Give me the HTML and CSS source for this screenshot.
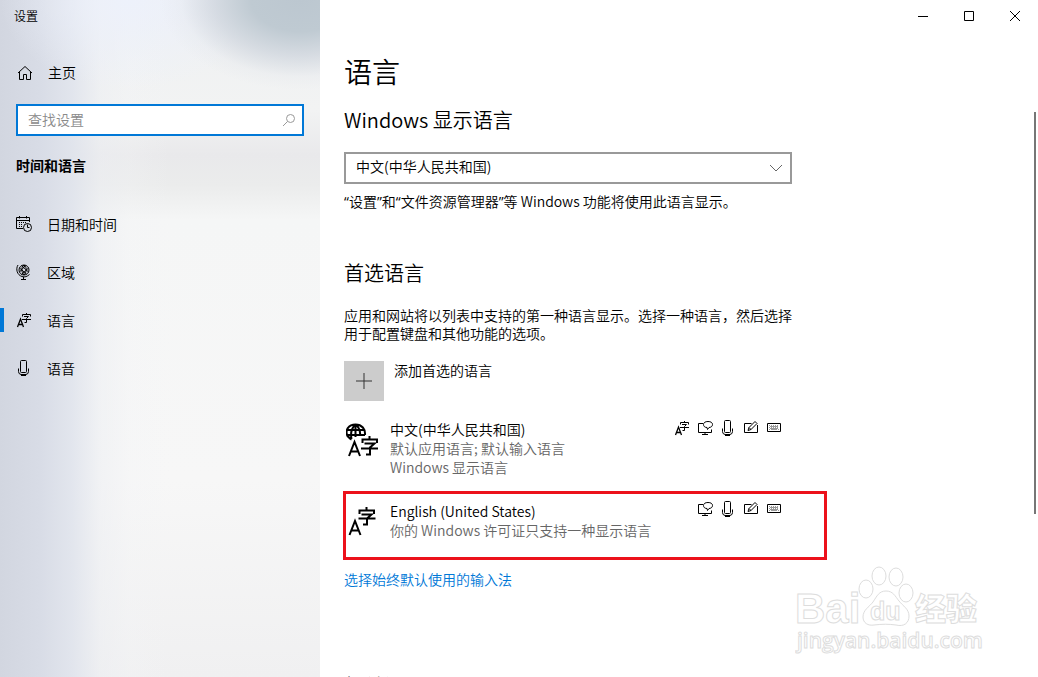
FILE: index.html
```html
<!DOCTYPE html>
<html lang="zh-CN">
<head>
<meta charset="utf-8">
<meta name="viewport" content="width=device-width, initial-scale=1">
<title>设置</title>
<link rel="stylesheet" href="styles.css">
</head>
<body>
<svg class="symbols" aria-hidden="true">
  <symbol id="lang" viewBox="0 0 16 16"><path stroke-width="1.300" d="M1.500 15L4.500 7L7.500 15M2.500 12.500H6.500"/><path d="M10.500 1V2.500M6.500 4.500V2.500H14.500V4.500M8 4.500H12.500L10.500 6.500V10.500H8.500M6 7.500H15"/></symbol>
  <symbol id="display" viewBox="0 0 16 16"><path d="M6 3.500H1.500V12.500H14.500V9.500M5 14.500H11M8 12.500V14.500M10 7.500C7.500 7.500 6.500 6 6.500 4.500C6.500 2.500 8.300 1.500 11 1.500S15.500 2.500 15.500 4.500S13.700 7.500 12 7.500L10.500 9.500Z"/></symbol>
  <symbol id="mic" viewBox="0 0 16 16"><path d="M4.500 1.500A1 1 0 0 1 5.500 .5H9.500A1 1 0 0 1 10.500 1.500V11.500A1 1 0 0 1 9.500 12.500H5.500A1 1 0 0 1 4.500 11.500ZM2.500 8.500V11.500A3 3 0 0 0 5 14.500H10A3 3 0 0 0 12.500 11.500V8.500M7.500 14.500V16M5 15.500H10"/></symbol>
  <symbol id="pen" viewBox="0 0 16 16"><path d="M8.500 3.500H1.500V12.500H14.500V5M5 10.500L6 7.500L12 1.500L14 3.500L8 9.500ZM6 7.500L8 9.500"/></symbol>
  <symbol id="keyboard" viewBox="0 0 16 16"><path d="M1.500 3.500H14.500V11.500H1.500Z"/><path class="keys" d="M3 5.500H13M3 7.500H13" stroke-dasharray="1 1"/><path class="keys" d="M3 9.500H4M5 9.500H11M12 9.500H13M4 6.500H12M4 8.500H12"/></symbol>
</svg>
<div class="window">
  <aside class="sidebar">
    <div class="app-name">设置</div>
    <a class="nav-item" href="#home">
      <svg class="icon" viewBox="0 0 16 16"><path d="M1 8L8 1.500L15 8M2.500 7V14.500H6.500V9.500H9.500V14.500H13.500V7"/></svg>
      <span>主页</span>
    </a>
    <label class="search">
      <input type="text" placeholder="查找设置" aria-label="查找设置">
      <svg class="search-icon" viewBox="0 0 14 14"><circle cx="8.500" cy="5.500" r="4"/><path d="M5.500 8.500L1 13"/></svg>
    </label>
    <h2 class="group">时间和语言</h2>
    <nav>
      <a class="nav-item" href="#date">
        <svg class="icon" viewBox="0 0 16 16"><path d="M7 12.500H.5V1.500H13.500V6M.5 4.500H13.500M3.500 0V2.500M10.500 0V2.500M11.500 8.500V11.500H13.500"/><path d="M3 6.500H11M3 8.500H7M3 10.500H7" stroke-dasharray="1 1"/><circle cx="11.500" cy="11.500" r="4"/></svg>
        <span>日期和时间</span>
      </a>
      <a class="nav-item" href="#region">
        <svg class="icon" viewBox="0 0 16 16"><circle cx="8" cy="6" r="5"/><path d="M3.500 4L10.500 10M5.500 1.500L12.500 8M3.500 8L9.500 1.500M5.500 10.500L12.500 4M8 1C4.500 4 5.500 8 8 11M8 1C11.500 4 10.500 8 8 11M2 1C-.5 5 1 11 6 12.500C9 13.500 11 12.500 13.500 10.500M7.500 13V15M5 15.500H10"/></svg>
        <span>区域</span>
      </a>
      <a class="nav-item current" href="#language" aria-current="page">
        <svg class="icon"><use href="#lang"/></svg>
        <span>语言</span>
      </a>
      <a class="nav-item" href="#speech">
        <svg class="icon"><use href="#mic"/></svg>
        <span>语音</span>
      </a>
    </nav>
  </aside>

  <main class="main">
    <div class="titlebar">
      <button type="button" aria-label="最小化"><svg viewBox="0 0 12 12"><path d="M1 6.500H11"/></svg></button>
      <button type="button" aria-label="最大化"><svg viewBox="0 0 12 12"><path d="M1.500 1.500H10.500V10.500H1.500Z"/></svg></button>
      <button type="button" aria-label="关闭"><svg viewBox="0 0 12 12"><path d="M1 1L11 11M11 1L1 11"/></svg></button>
    </div>
    <div class="content">
      <h1>语言</h1>
      <section>
        <h2><label for="display-language">Windows 显示语言</label></h2>
        <div class="select">
          <select id="display-language"><option>中文(中华人民共和国)</option></select>
          <svg class="chevron" viewBox="0 0 14 8"><path d="M1 1L7 7L13 1"/></svg>
        </div>
        <p class="hint"><span class="quote">“</span>设置<span class="quote">”</span>和<span class="quote">“</span>文件资源管理器<span class="quote">”</span>等 Windows 功能将使用此语言显示。</p>
      </section>
      <section class="preferred">
        <h2>首选语言</h2>
        <p class="intro">应用和网站将以列表中支持的第一种语言显示。选择一种语言，然后选择用于配置键盘和其他功能的选项。</p>
        <button class="add" type="button">
          <span class="plus"><svg viewBox="0 0 16 16"><path d="M0 8H16M8 0V16"/></svg></span>
          <span>添加首选的语言</span>
        </button>
        <ul class="languages">
          <li class="language">
            <svg class="language-icon" viewBox="0 0 34 34"><path d="M2 14C-2 7 3 1.500 9.500 1.500C16 1.500 19.500 6 19 12M1 7H18.500M1 12H19M9.500 1.500V14M9.500 1.500C4.500 6 4.500 11 5.500 16M9.500 1.500C14 5 14.500 9 14 13M2 13C3 15 4 16 5.500 16.500"/><path d="M3 33L8.500 19L14 33M5 28.500H12M23.500 13V16M16.500 20V16.500H31V20M18.500 20.500H28.500L24 24.500V31.500H20M15 25.500H32"/></svg>
            <div class="details">
              <strong>中文(中华人民共和国)</strong>
              <span>默认应用语言; 默认输入语言</span>
              <span>Windows 显示语言</span>
            </div>
            <div class="features">
              <svg><use href="#lang"/></svg><svg><use href="#display"/></svg><svg><use href="#mic"/></svg><svg><use href="#pen"/></svg><svg><use href="#keyboard"/></svg>
            </div>
          </li>
          <li class="language marked">
            <svg class="language-icon" viewBox="0 0 34 34"><path d="M3.500 31L9 17L14.500 31M5.500 26.500H12.500M20.500 3V6M13.500 10V6.500H28V10M15.500 10.500H25.500L21 14.500V20.500H17M12.500 14.500H29.500"/></svg>
            <div class="details">
              <strong>English (United States)</strong>
              <span>你的 Windows 许可证只支持一种显示语言</span>
            </div>
            <div class="features">
              <svg><use href="#display"/></svg><svg><use href="#mic"/></svg><svg><use href="#pen"/></svg><svg><use href="#keyboard"/></svg>
            </div>
          </li>
        </ul>
        <a class="link" href="#input">选择始终默认使用的输入法</a>
      </section>
      <h2 class="related">相关设置</h2>
    </div>
    <div class="scrollbar"></div>
    <svg class="watermark" viewBox="0 0 190 92">
      <text class="brand" x="0" y="60">Bai</text>
      <ellipse cx="71" cy="26" rx="7" ry="9"/><ellipse cx="84" cy="13" rx="7" ry="9"/><ellipse cx="101" cy="14" rx="7" ry="9"/><ellipse cx="111" cy="30" rx="7" ry="9"/>
      <path d="M91 28C84 28 82 33 78 39C74 44 68 47 68 54C68 60 73 63 79 62C87 61 94 61 101 62C109 64 114 60 114 53C114 46 108 43 104 38C100 33 98 28 91 28Z"/>
      <text class="du" x="75" y="57">du</text>
      <text class="cjk" x="120" y="57">经验</text>
      <text class="site" x="2" y="85">jingyan.baidu.com</text>
    </svg>
  </main>
</div>
</body>
</html>
```
FILE: styles.css
```css
* { box-sizing: border-box; }

body {
  margin: 0;
  font: 14px/18px "Noto Sans CJK SC", "Open Sans", sans-serif;
  font-weight: 350;
  color: #000;
  background: #fff;
}

h1, h2, p, ul { margin: 0; padding: 0; font-weight: inherit; }
a { color: inherit; text-decoration: none; }
button, input, select { font: inherit; color: inherit; border: 0; background: none; padding: 0; }
svg { fill: none; stroke: currentColor; stroke-width: 1; flex: none; }

.symbols { position: absolute; width: 0; height: 0; }

.window { display: flex; height: 100vh; overflow: hidden; }

.sidebar {
  flex: none;
  width: 320px;
  background:
    radial-gradient(ellipse 140px 90px at 300px 0, #bcc7d0 0%, #bfcad2 35%, #cad1daaa 62%, #dce0e733 85%, #e4e7ec00 100%),
    radial-gradient(ellipse 130px 90px at 130px 0, #edf1fb 0%, #edf1fb00 100%),
    linear-gradient(90deg, #d2d6e0 0, #d8dce6 40px, #dfe3ecdd 72px, #eceef288 100px, #f3f4f644 130px, #f3f4f600 170px),
    linear-gradient(180deg, #eef0f2 0, #f2f3f3 110px, #e9e9eb 155px, #ebecec 185px, #f5f6f6 220px, #f7f7f7 480px, #f0f0f1 100%);
}

.app-name { padding: 7px 14px 0; font-size: 12px; height: 49px; }

.nav-item {
  display: flex;
  align-items: center;
  gap: 15px;
  height: 48px;
  padding-left: 17px;
}
.nav-item span { padding-bottom: 2px; }
nav .nav-item { padding-left: 16px; }
nav .nav-item span { padding-bottom: 1px; }
.current { box-shadow: inset 4px 0 #0078d7; clip-path: inset(12px 0); }
.icon { width: 16px; height: 16px; }

.search {
  display: flex;
  align-items: center;
  height: 32px;
  margin: 7px 16px 0;
  padding: 0 6px 0 10px;
  border: 2px solid #0078d7;
  background: #fff;
}
.search input { flex: 1; min-width: 0; padding-bottom: 3px; outline: 0; }
.search input::placeholder { color: #8a8a8a; opacity: 1; }
.search-icon { width: 14px; height: 14px; color: #999; }

.group { margin: 20px 16px 26px; font-size: 14px; font-weight: 700; }

.main { position: relative; flex: 1; min-width: 0; }

.titlebar { display: flex; justify-content: flex-end; height: 32px; }
.titlebar button { display: grid; place-items: center; width: 46px; }
.titlebar svg { width: 12px; height: 12px; }

.content { max-width: 507px; padding: 19px 0 0 24px; }
.content h1 { font-size: 28px; line-height: 40px; }
.content h2 { font-size: 20px; line-height: 28px; margin-top: 15px; }

.select { position: relative; max-width: 448px; height: 32px; margin-top: 18px; }
.select select {
  appearance: none;
  width: 100%;
  height: 100%;
  padding: 0 32px 4px 10px;
  border: 2px solid #999;
  background: #fff;
}
.chevron { position: absolute; right: 9px; top: 12px; width: 14px; height: 8px; color: #666; pointer-events: none; }

.hint { margin-top: 8px; }
.quote { font-family: "Open Sans", sans-serif; font-weight: 400; }
.content .preferred h2 { margin-top: 48px; }
.intro { max-width: 450px; margin-top: 19px; }

.add { display: flex; align-items: flex-start; gap: 10px; margin-top: 19px; }
.plus { display: grid; place-items: center; width: 40px; height: 40px; background: #ccc; }
.plus svg { width: 16px; height: 16px; color: #333; }

.languages { list-style: none; margin-top: 16px; line-height: 19px; }
.language { display: flex; margin-left: -1px; padding: 3px; }
.language-icon { width: 34px; height: 34px; margin-top: 3px; margin-right: 10px; stroke-width: 2; }
.details { display: flex; flex-direction: column; flex: 1; }
.details strong { font-weight: inherit; }
.details span { color: #666; }
.features { display: flex; gap: 7px; margin-right: 42px; }
.features svg { width: 16px; height: 16px; }
.keys { stroke: #999; }
.marked { min-height: 69px; margin-top: 11px; padding: 7px 0 0; border: 3px solid #ec111b; }
.marked .details { padding-top: 1px; }

.link { display: block; margin-top: 10px; color: #0078d7; }
.content .related { margin-top: 84px; }

.scrollbar { position: absolute; right: 2px; top: 112px; width: 2px; height: 402px; background: #767676; }

.watermark { position: absolute; right: 53px; bottom: 22px; width: 190px; height: 92px; fill: #fff; stroke: #ddd; font-family: "Liberation Sans", sans-serif; font-weight: 700; pointer-events: none; }
.brand { font-size: 42px; }
.du { font-size: 25px; }
.cjk { font: 900 31px "Noto Sans CJK SC", sans-serif; }
.site { font: 600 21px "Open Sans", sans-serif; }
```
